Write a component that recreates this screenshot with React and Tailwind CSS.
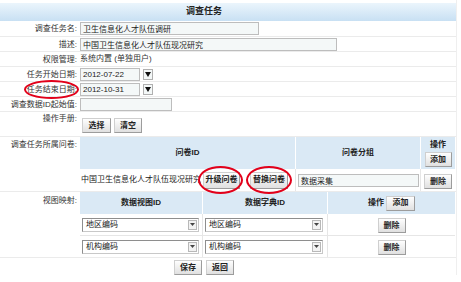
import React from 'react';

const Btn = ({ children, className = '' }) => (
  <button
    type="button"
    className={`h-[15px] shrink-0 border border-[#cfcfcf] border-r-[#9c9c9c] border-b-[#9c9c9c] bg-linear-to-b from-[#fefefe] to-[#e0e0e0] text-[8px] font-bold leading-none text-[#222] ${className}`}
  >
    {children}
  </button>
);

const Oval = ({ className = '' }) => (
  <span className={`pointer-events-none absolute rounded-[50%] border-2 border-[#e2001a] ${className}`} />
);

const TextBox = ({ value, className = '' }) => (
  <input
    readOnly
    value={value}
    className={`h-[13px] border border-[#bdbdbd] bg-[#f4f8f8] px-[2px] text-[8px] leading-none text-[#222] outline-none ${className}`}
  />
);

const DateBox = ({ value }) => (
  <div className="flex items-center">
    <TextBox value={value} className="w-[60px]" />
    <div className="ml-[3px] flex h-[11px] w-[10px] items-center justify-center border border-[#b0b0b0] bg-[#f4f8f8]">
      <svg width="6" height="5" viewBox="0 0 6 5">
        <path d="M0 0h6L3 5z" fill="#111" />
      </svg>
    </div>
  </div>
);

const SelectBox = ({ value, className = '' }) => (
  <div className={`flex h-[14px] items-stretch border border-[#8e8e8e] border-r-[#c8c8c8] border-b-[#c8c8c8] bg-white ${className}`}>
    <span className="flex-1 pl-[3px] leading-[12px]">{value}</span>
    <span className="m-[1px] flex w-[9px] items-center justify-center border border-[#b8b8b8] bg-[#f2f2f2]">
      <svg width="5" height="3" viewBox="0 0 5 3">
        <path d="M0 0h5L2.5 3z" fill="#444" />
      </svg>
    </span>
  </div>
);

const Row = ({ label, className = '', labelClass = 'self-center', children }) => (
  <div className={`flex border-b border-[#ebebeb] ${className}`}>
    <div className={`w-[80px] shrink-0 pr-[3px] text-right leading-[11px] text-[#333] ${labelClass}`}>{label}</div>
    <div className="flex min-w-0 flex-1">{children}</div>
  </div>
);

export default function App() {
  return (
    <div className="h-[282px] w-[461px] overflow-hidden bg-white text-[8px] text-[#222] [font-family:'Liberation_Sans','Noto_Sans_CJK_SC',sans-serif]">
      <div className="w-[457px] border-r border-[#efefef] pt-[3px]">
        <div className="flex h-[18px] items-center justify-center bg-linear-to-b from-[#ebf5fc] to-[#c8e0f3] pr-[48px] text-[9px] font-bold">
          调查任务
        </div>

        <Row label="调查任务名:" className="h-[16px]">
          <div className="flex items-center">
            <TextBox value="卫生信息化人才队伍调研" className="w-[179px]" />
          </div>
        </Row>

        <Row label="描述:" className="h-[15px]">
          <div className="flex items-center">
            <TextBox value="中国卫生信息化人才队伍现况研究" className="w-[257px]" />
          </div>
        </Row>

        <Row label="权限管理:" className="h-[15px]">
          <div className="flex items-center text-[#333]">系统内置 (单独用户)</div>
        </Row>

        <Row label="任务开始日期:" className="h-[15px]">
          <DateBox value="2012-07-22" />
        </Row>

        <Row
          label={
            <span className="relative inline-block leading-[11px]">
              任务结束日期:
              <Oval className="-left-[3px] -right-[2px] -top-[4px] -bottom-[4px]" />
            </span>
          }
          className="h-[15px]"
        >
          <DateBox value="2012-10-31" />
        </Row>

        <Row label="调查数据ID起始值:" className="h-[15px]">
          <div className="flex items-center">
            <TextBox value="" className="h-[12px] w-[92px]" />
          </div>
        </Row>

        <Row label="操作手册:" className="h-[25px]" labelClass="pt-[1px]">
          <div className="flex gap-[3px] pl-[2px] pt-[6px]">
            <Btn className="w-[29px]">选择</Btn>
            <Btn className="w-[28px]">清空</Btn>
          </div>
        </Row>

        <Row label="调查任务所属问卷:" className="h-[55px]" labelClass="pt-[2px]">
          <div className="grid h-[54px] w-[375px] grid-cols-[216px_125px_34px] grid-rows-[32px_22px]">
            <div className="flex items-center justify-center border-r border-white bg-[#dae9f5] font-bold">问卷ID</div>
            <div className="flex items-center justify-center border-r border-white bg-[#dae9f5] font-bold">问卷分组</div>
            <div className="flex flex-col items-center bg-[#dae9f5] pt-[2px] font-bold">
              <span className="leading-[11px]">操作</span>
              <Btn className="mt-[2px] w-[27px]">添加</Btn>
            </div>

            <div className="flex items-center border-r border-[#e6e6e6] pl-[1px]">
              <span className="w-[121px] overflow-hidden whitespace-nowrap">中国卫生信息化人才队伍现况研究</span>
              <span className="relative ml-[1px]">
                <Btn className="h-[17px] w-[37px]">升级问卷</Btn>
                <Oval className="-left-[5px] -right-[3px] -top-[6px] -bottom-[5px]" />
              </span>
              <span className="relative ml-[10px]">
                <Btn className="h-[17px] w-[38px]">替换问卷</Btn>
                <Oval className="-left-[4px] -right-[4px] -top-[6px] -bottom-[5px]" />
              </span>
            </div>
            <div className="flex items-center border-r border-[#e6e6e6] pl-[2px]">
              <TextBox value="数据采集" className="h-[13px] w-[121px]" />
            </div>
            <div className="flex items-center justify-center pt-[3px]">
              <Btn className="w-[28px]">删除</Btn>
            </div>
          </div>
        </Row>

        <Row label="视图映射:" className="h-[66px]" labelClass="pt-[3px]">
          <div className="grid h-[65px] w-[375px] grid-cols-[123px_125px_127px] grid-rows-[22px_22px_21px]">
            <div className="flex items-center justify-center border-r border-white bg-[#dae9f5] font-bold">数据视图ID</div>
            <div className="flex items-center justify-center border-r border-white bg-[#dae9f5] font-bold">数据字典ID</div>
            <div className="flex items-center justify-center gap-[2px] bg-[#dae9f5] font-bold">
              <span>操作</span>
              <Btn className="w-[29px]">添加</Btn>
            </div>

            <div className="flex items-center border-r border-b border-[#e6e6e6] pl-[2px]">
              <SelectBox value="地区编码" className="w-[117px]" />
            </div>
            <div className="flex items-center border-r border-b border-[#e6e6e6] pl-[2px]">
              <SelectBox value="地区编码" className="w-[118px]" />
            </div>
            <div className="flex items-center justify-center border-b border-[#e6e6e6] pt-[2px]">
              <Btn className="w-[28px]">删除</Btn>
            </div>

            <div className="flex items-center border-r border-[#e6e6e6] pl-[2px]">
              <SelectBox value="机构编码" className="w-[117px]" />
            </div>
            <div className="flex items-center border-r border-[#e6e6e6] pl-[2px]">
              <SelectBox value="机构编码" className="w-[118px]" />
            </div>
            <div className="flex items-center justify-center pt-[2px]">
              <Btn className="w-[28px]">删除</Btn>
            </div>
          </div>
        </Row>

        <div className="flex justify-center gap-[4px] pr-[48px] pt-[2px]">
          <Btn className="w-[28px]">保存</Btn>
          <Btn className="w-[28px]">返回</Btn>
        </div>
      </div>
    </div>
  );
}
